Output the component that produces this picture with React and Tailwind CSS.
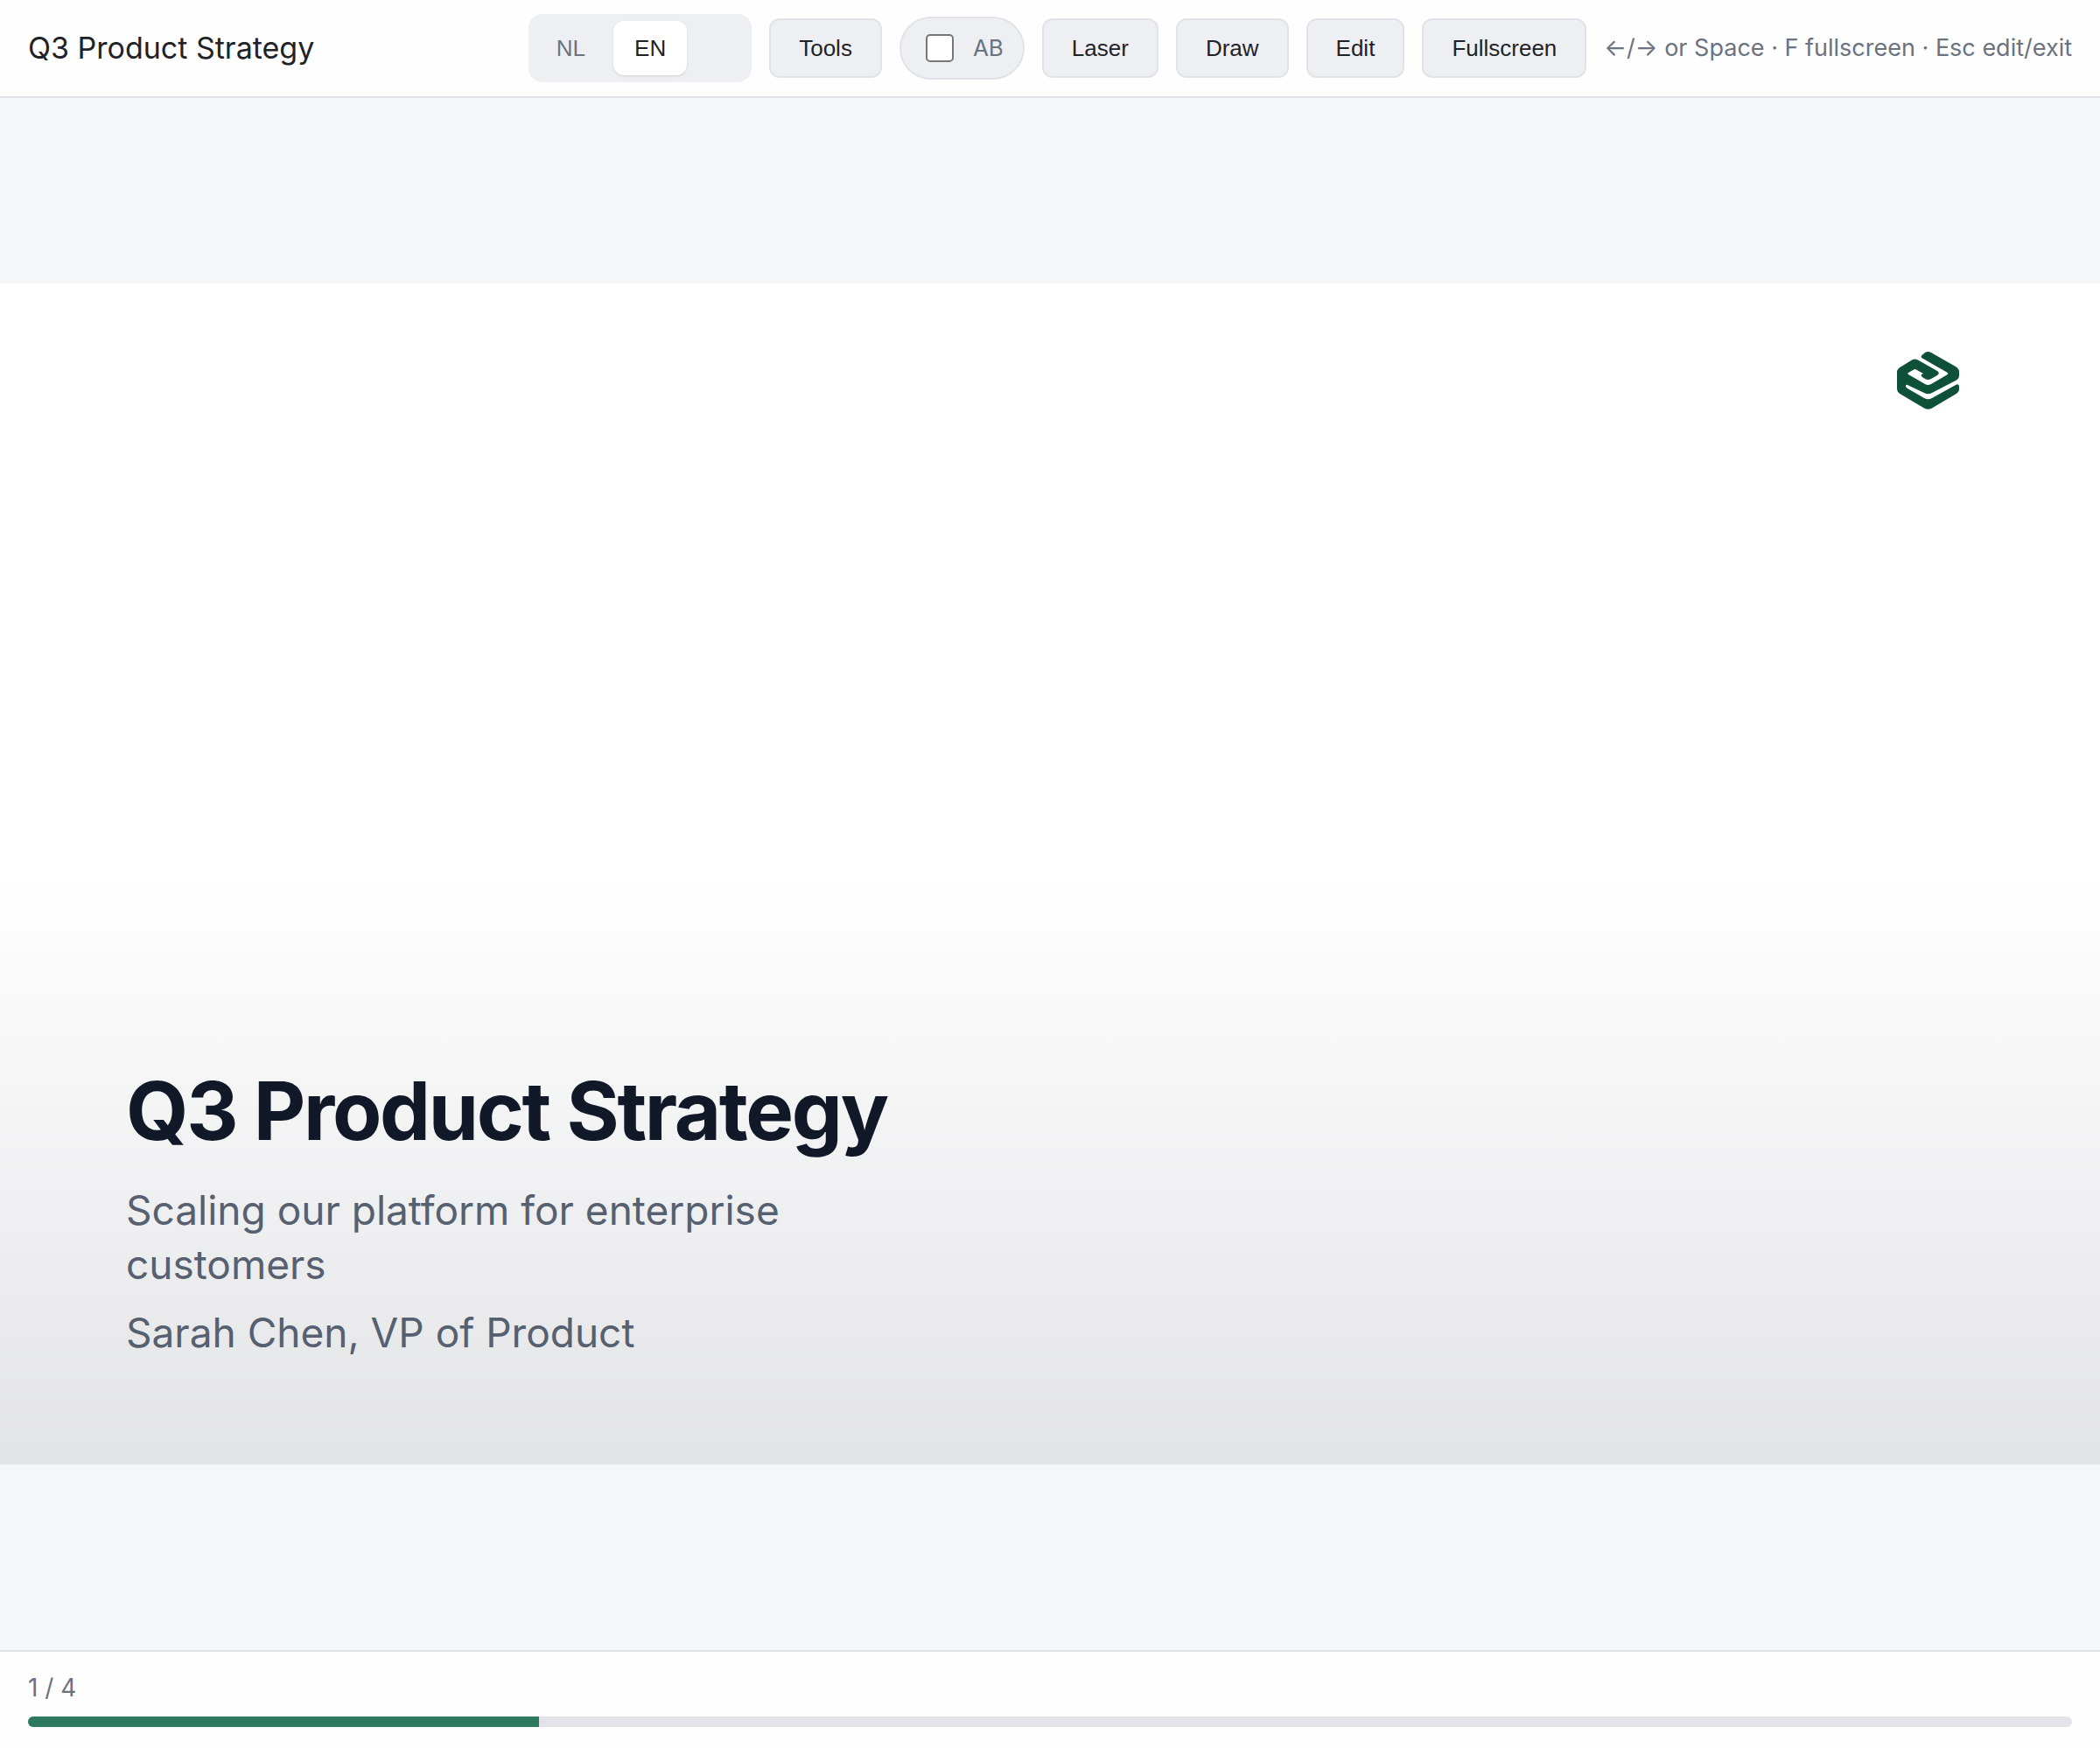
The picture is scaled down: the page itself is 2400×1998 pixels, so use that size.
const languages = ['NL', 'EN'];
const actions = ['Laser', 'Draw', 'Edit', 'Fullscreen'];

const slide = {
    current: 1,
    total: 4,
    title: 'Q3 Product Strategy',
    lines: ['Scaling our platform for enterprise customers', 'Sarah Chen, VP of Product'],
};

const ToolButton = ({ children }) => (
    <button
        type="button"
        className="rounded-xl border-2 border-[#e2e3e8] bg-[#eeeff3] px-8 py-[17px] font-['Liberation_Sans',Arial,sans-serif] text-[26px] leading-[30px] text-[#1f2328]"
    >
        {children}
    </button>
);

const LanguageSwitch = ({ active }) => (
    <div className="flex gap-2 rounded-2xl bg-[#eeeff3] p-2 font-['Liberation_Sans',Arial,sans-serif] text-[26px] leading-[30px]">
        {languages.map((lang) => (
            <button
                key={lang}
                type="button"
                aria-pressed={lang === active}
                className={
                    lang === active
                        ? 'rounded-xl bg-white px-6 py-4 text-[#1f2328] shadow-sm'
                        : 'rounded-xl px-6 py-4 text-[#6b7280]'
                }
            >
                {lang}
            </button>
        ))}
        <span className="w-[58px]" />
    </div>
);

const Logo = () => (
    <svg viewBox="0 0 72 66" className="h-[66px] w-[72px]" fill="#0f5038" role="img" aria-label="Logo">
        <path d="M17 9.500Q20.500 7.500 24 9.500L46 22Q49.500 24.500 46 27L39 31Q35.500 33 32 31L29 29Q27 27.500 28 26L30 25L22 20.500Q20.500 19.700 19 20.500L13 24Q11.500 25 13 26L32 37Q35.500 39 39 37L57 26.500Q59.500 25 57 23.500L29 7.500Q27 6 28 4.500L32 1Q35.500 -1 39 1L67 17Q71 19.500 71 23V27Q71 31 67 33L40 47Q35.500 49.500 31 47L12 38Q10 37 10 39Q10 41 12 42L31 53Q35.500 55.500 40 53L68 37.500Q71 36.500 71 40V43Q71 46 67 48.500L40 64.500Q35.500 67 31 64.500L4 48.500Q0 46 0 42V23Q0 20 4 17.500Z" />
    </svg>
);

const App = () => (
    <div className="flex min-h-screen flex-col bg-[#f6f7f9] font-['Inter',sans-serif] text-[#1f2328]">
        <header className="flex items-center justify-between border-b-2 border-[#e2e3e8] bg-[#fefefe] px-8 py-4">
            <div className="text-[34px] leading-[40px]">{slide.title}</div>
            <div className="flex items-center gap-5">
                <LanguageSwitch active="EN" />
                <ToolButton>Tools</ToolButton>
                <label className="flex items-center gap-[22px] rounded-full border-2 border-[#e2e3e8] bg-[#eeeff3] py-[18px] pr-[22px] pl-7 text-[26px] leading-[32px] text-[#6b7280]">
                    <input
                        type="checkbox"
                        className="size-8 appearance-none rounded-[5px] border-2 border-[#767676] bg-white"
                    />
                    AB
                </label>
                {actions.map((action) => (
                    <ToolButton key={action}>{action}</ToolButton>
                ))}
                <span className="text-[27px] leading-[32px] text-[#6b7280]">
                    ←/→ or Space · F fullscreen · Esc edit/exit
                </span>
            </div>
        </header>

        <main className="flex flex-1 items-center">
            <section className="flex aspect-video w-full flex-col justify-between bg-white bg-linear-to-t/srgb from-[#111827]/12 to-transparent to-50% px-36 pt-[78px] pb-[120px]">
                <div className="flex justify-end pr-4">
                    <Logo />
                </div>
                <div className="text-[46px] leading-[62px] text-[#566070]">
                    <h1 className="mb-8 text-[92px] leading-[100px] font-bold tracking-tight text-[#111827]">
                        {slide.title}
                    </h1>
                    <p className="mb-4 w-[780px]">{slide.lines[0]}</p>
                    <p>{slide.lines[1]}</p>
                </div>
            </section>
        </main>

        <footer className="flex flex-col gap-4 border-t-2 border-[#e2e3e8] bg-[#fefefe] px-8 py-6">
            <div className="text-[28px] leading-[34px] text-[#6b7280]">
                {slide.current} / {slide.total}
            </div>
            <div className="h-3 overflow-hidden rounded-full bg-[#e2e3e8]">
                <div
                    className="h-full bg-[#2d7a5f]"
                    style={{ width: `${(slide.current / slide.total) * 100}%` }}
                />
            </div>
        </footer>
    </div>
);

export default App;
